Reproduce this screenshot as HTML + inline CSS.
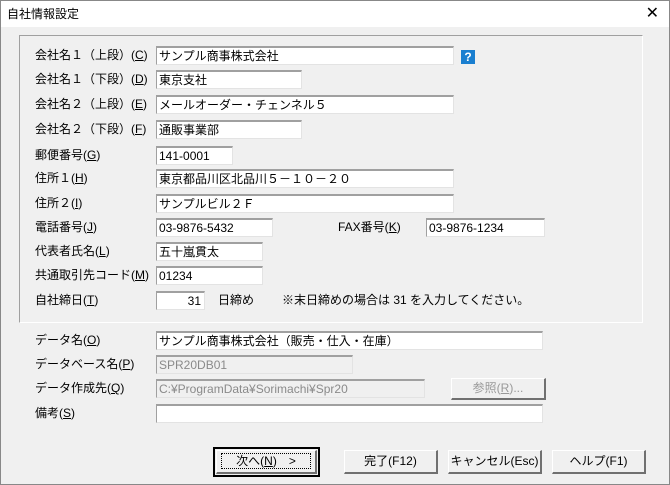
<!DOCTYPE html><html><head><meta charset="utf-8"><style>
*{box-sizing:border-box}
body{margin:0;width:670px;height:485px;overflow:hidden;font-family:"Liberation Sans","Noto Sans CJK JP",sans-serif;font-size:12px;color:#000;background:#fff}
.win{position:absolute;left:0;top:0;width:670px;height:485px;border:1px solid #888;background:#f0f0f0}
.title{position:absolute;left:0;top:0;width:668px;height:26px;background:#fff;font-size:12px;line-height:26px;padding-left:6px}
.x{position:absolute;right:10px;top:0;font-size:16px;line-height:26px}
.grp{position:absolute;left:18px;top:34px;width:624px;height:288px;border-top:1px solid #a0a0a0;border-left:1px solid #a0a0a0;border-right:1px solid #fff;border-bottom:1px solid #fff}
.l{position:absolute;left:34px;line-height:18px;white-space:nowrap}
.f{position:absolute;left:155px;height:19px;background:#fff;border-top:2px solid #a0a0a0;border-left:1px solid #a0a0a0;border-right:1px solid #e3e3e3;border-bottom:1px solid #e3e3e3;line-height:16px;padding-left:2px;white-space:nowrap;overflow:hidden}
.d{background:#f0f0f0;color:#8a8a8a}
.b{position:absolute;top:449px;height:24px;border:1px solid #fff;border-right:2px solid #707070;border-bottom:2px solid #707070;background:#f0f0f0;text-align:center;line-height:21px}
u{text-decoration:underline}
</style></head><body><div class="win">
<div class="title">自社情報設定<span class="x">✕</span></div>
<div class="grp"></div>
<div class="l" style="top:45px">会社名１（上段）(<u>C</u>)</div><div class="f" style="top:45px;width:298px">サンプル商事株式会社</div>
<div style="position:absolute;left:460px;top:49px;width:14px;height:14px;background:#1a7fd0;color:#fff;font-weight:bold;font-size:12px;line-height:14px;text-align:center">?</div>
<div class="l" style="top:69px">会社名１（下段）(<u>D</u>)</div><div class="f" style="top:69px;width:146px">東京支社</div>
<div class="l" style="top:94px">会社名２（上段）(<u>E</u>)</div><div class="f" style="top:94px;width:298px">メールオーダー・チェンネル５</div>
<div class="l" style="top:119px">会社名２（下段）(<u>F</u>)</div><div class="f" style="top:119px;width:146px">通販事業部</div>
<div class="l" style="top:145px">郵便番号(<u>G</u>)</div><div class="f" style="top:145px;width:77px">141-0001</div>
<div class="l" style="top:168px">住所１(<u>H</u>)</div><div class="f" style="top:168px;width:298px">東京都品川区北品川５－１０－２０</div>
<div class="l" style="top:193px">住所２(<u>I</u>)</div><div class="f" style="top:193px;width:298px">サンプルビル２Ｆ</div>
<div class="l" style="top:217px">電話番号(<u>J</u>)</div><div class="f" style="top:217px;width:117px">03-9876-5432</div>
<div class="l" style="top:217px;left:337px">FAX番号(<u>K</u>)</div><div class="f" style="top:217px;left:425px;width:119px">03-9876-1234</div>
<div class="l" style="top:241px">代表者氏名(<u>L</u>)</div><div class="f" style="top:241px;width:107px">五十嵐貫太</div>
<div class="l" style="top:265px">共通取引先コード(<u>M</u>)</div><div class="f" style="top:265px;width:107px">01234</div>
<div class="l" style="top:290px">自社締日(<u>T</u>)</div><div class="f" style="top:290px;width:49px;text-align:right;padding-right:3px">31</div>
<div class="l" style="top:290px;left:217px">日締め</div><div class="l" style="top:290px;left:281px">※末日締めの場合は 31 を入力してください。</div>
<div class="l" style="top:330px">データ名(<u>O</u>)</div><div class="f" style="top:330px;width:387px">サンプル商事株式会社（販売・仕入・在庫）</div>
<div class="l" style="top:354px">データベース名(<u>P</u>)</div><div class="f d" style="top:354px;width:197px">SPR20DB01</div>
<div class="l" style="top:378px">データ作成先(<u>Q</u>)</div><div class="f d" style="top:378px;width:269px">C:¥ProgramData¥Sorimachi¥Spr20</div>
<div class="b" style="left:450px;top:377px;width:95px;height:22px;color:#999;line-height:19px">参照(<u>R</u>)...</div>
<div class="l" style="top:403px">備考(<u>S</u>)</div><div class="f" style="top:403px;width:387px"></div>
<div style="position:absolute;left:212px;top:446px;width:107px;height:30px;border:2px solid #000"></div>
<div class="b" style="left:215px;top:449px;width:101px"><span style="border:1px dotted #000;padding:0 14px">次へ(<u>N</u>)　&gt;</span></div>
<div class="b" style="left:343px;width:94px">完了(F12)</div>
<div class="b" style="left:447px;width:94px">キャンセル(Esc)</div>
<div class="b" style="left:551px;width:94px">ヘルプ(F1)</div>
</div></body></html>
